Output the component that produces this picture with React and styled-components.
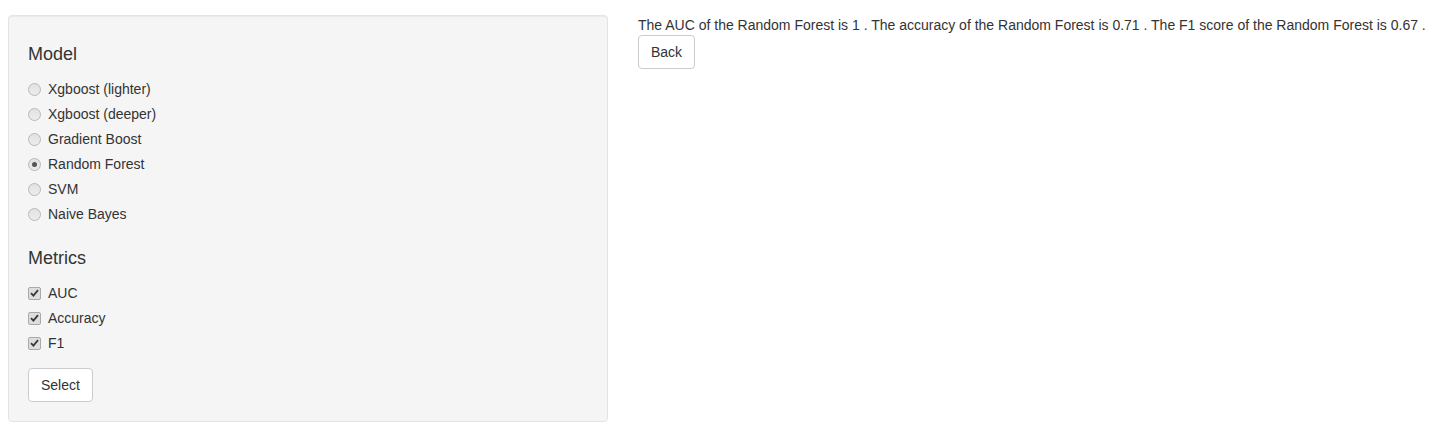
import React from 'react';
import styled, { createGlobalStyle } from 'styled-components';

const GlobalStyle = createGlobalStyle`
  body {
    margin: 0;
    background: #fff;
    color: #333;
    font-family: "Liberation Sans", Arial, sans-serif;
    font-size: 14px;
    line-height: 20px;
  }
`;

const Page = styled.div`
  display: flex;
  align-items: flex-start;
  gap: 30px;
  padding: 15px 0 0 8px;
`;

const Well = styled.div`
  box-sizing: border-box;
  width: 600px;
  padding: 19px;
  background: #f5f5f5;
  border: 1px solid #e3e3e3;
  border-radius: 4px;
  box-shadow: inset 0 1px 1px rgba(0, 0, 0, 0.05);
`;

const Heading = styled.h4`
  margin: ${p => (p.$first ? '9px' : '24px')} 0 15px;
  font-size: 18px;
  line-height: 20px;
  font-weight: 500;
`;

const OptionList = styled.div`
  display: flex;
  flex-direction: column;
  gap: 5px;
`;

const Option = styled.label`
  display: flex;
  align-items: center;
  gap: 7px;
  height: 20px;
  cursor: pointer;
`;

const RadioMark = styled.span`
  box-sizing: border-box;
  width: 13px;
  height: 13px;
  border-radius: 50%;
  border: 1px solid #b8b8b8;
  background: linear-gradient(#e2e2e2, #ececec);
  display: flex;
  align-items: center;
  justify-content: center;
  &::after {
    content: '';
    width: 5px;
    height: 5px;
    border-radius: 50%;
    background: ${p => (p.$checked ? '#555' : 'transparent')};
  }
`;

const CheckMark = styled.span`
  box-sizing: border-box;
  width: 13px;
  height: 13px;
  border-radius: 2px;
  border: 1px solid #a9a9a9;
  background: #dedede;
  display: flex;
  align-items: center;
  justify-content: center;
`;

const Button = styled.button`
  box-sizing: border-box;
  height: 34px;
  padding: 6px 12px;
  margin-top: ${p => p.$top || 0}px;
  border: 1px solid #ccc;
  border-radius: 4px;
  background: #fff;
  color: #333;
  font-family: inherit;
  font-size: 14px;
  line-height: 20px;
  cursor: pointer;
`;

const Main = styled.div`
  display: flex;
  flex-direction: column;
  align-items: flex-start;
`;

const models = [
  'Xgboost (lighter)',
  'Xgboost (deeper)',
  'Gradient Boost',
  'Random Forest',
  'SVM',
  'Naive Bayes',
];

const metrics = ['AUC', 'Accuracy', 'F1'];

function Tick() {
  return (
    <svg width="9" height="8" viewBox="0 0 9 8">
      <path d="M1 4.2 L3.4 6.6 L8 1.2" fill="none" stroke="#3a3a3a" strokeWidth="1.8" />
    </svg>
  );
}

export default function App() {
  const model = 'Random Forest';
  return (
    <>
      <GlobalStyle />
      <Page>
        <Well>
          <Heading $first>Model</Heading>
          <OptionList>
            {models.map(m => (
              <Option key={m}>
                <RadioMark $checked={m === model} />
                <span>{m}</span>
              </Option>
            ))}
          </OptionList>
          <Heading>Metrics</Heading>
          <OptionList>
            {metrics.map(m => (
              <Option key={m}>
                <CheckMark><Tick /></CheckMark>
                <span>{m}</span>
              </Option>
            ))}
          </OptionList>
          <Button $top={15}>Select</Button>
        </Well>
        <Main>
          <div>
            The AUC of the Random Forest is 1 . The accuracy of the Random Forest is 0.71 . The F1 score of the Random Forest is 0.67 .
          </div>
          <Button>Back</Button>
        </Main>
      </Page>
    </>
  );
}
